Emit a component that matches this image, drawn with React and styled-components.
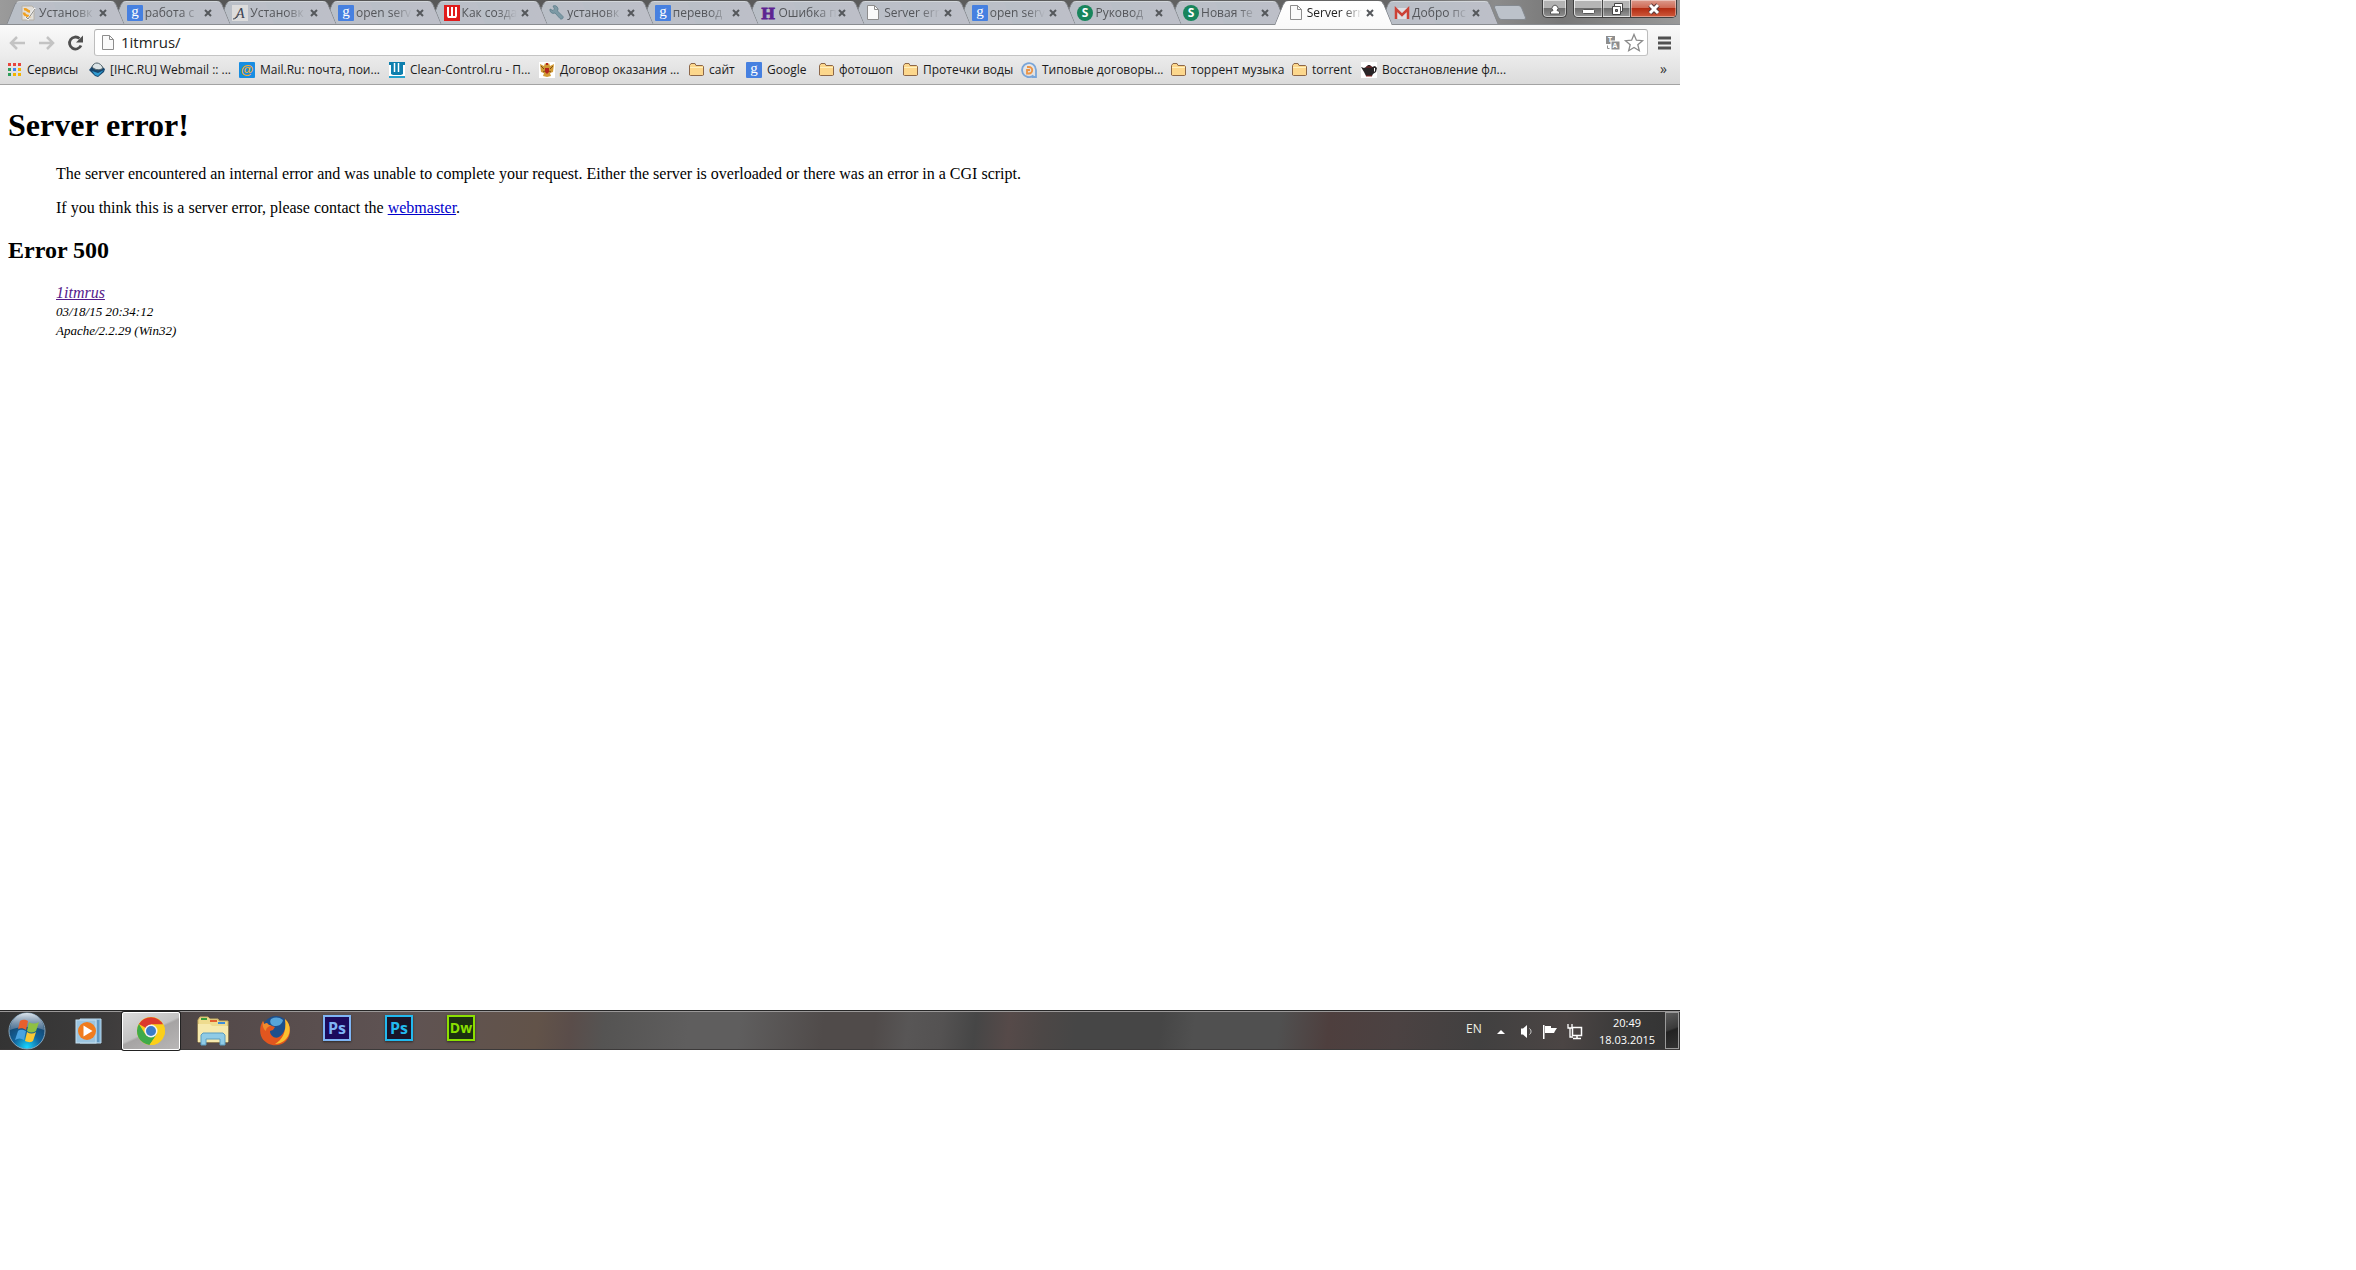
import React, { useState } from "react";
import styled, { createGlobalStyle, css } from "styled-components";

const uiFont = `"Open Sans", "Noto Sans", sans-serif`;

const GlobalStyle = createGlobalStyle`
  html, body, #root {
    height: 100%;
  }
  body {
    margin: 0;
    background: #fff;
  }
  * {
    box-sizing: border-box;
  }
  button {
    border: 0;
    padding: 0;
    margin: 0;
    background: none;
    font-family: inherit;
  }
  svg {
    display: block;
    flex: none;
    overflow: visible;
  }
`;

const Page = styled.div`
  display: grid;
  grid-template-columns: 1680fr 676fr;
  grid-template-rows: 1050fr 220fr;
  min-height: 100%;
`;

const Desktop = styled.div`
  display: flex;
  flex-direction: column;
  min-width: 0;
  font-family: ${uiFont};
  font-size: 12px;
`;

/* ---------- tab strip ---------- */

const TabStrip = styled.div`
  display: flex;
  align-items: flex-start;
  height: 25px;
  padding-right: 3px;
  background: linear-gradient(90deg, #9b9b9b 0, #8a8a8a 60px, #555 130px, #5c5c5c 60%, #666 83%, #8b8b8b 89%, #777 93%, #999 100%);
  border-bottom: 1px solid #898c90;
  position: relative;
`;

const Tabs = styled.div`
  display: flex;
  flex: 1;
  min-width: 0;
  padding: 1px 8px 0 6px;
`;

const Tab = styled.div`
  position: relative;
  flex: 1;
  min-width: 0;
  display: flex;
  align-items: center;
  height: ${(p) => (p.$active ? "24px" : "23px")};
  padding: 0 15px 0 15px;
  margin-right: -14px;
  z-index: ${(p) => p.$level};

  &::before,
  &::after {
    content: "";
    position: absolute;
    z-index: -1;
    top: 0;
    bottom: 0;
    background: ${(p) => (p.$active ? "linear-gradient(#fff, #fafafa)" : "linear-gradient(90deg, #b9bfc7, #bdbfc8)")};
    border-top: 1px solid ${(p) => (p.$active ? "#fff" : "#d2d6da")};
  }
  &::before {
    left: 5px;
    width: 52%;
    transform: skewX(-22deg);
    border-left: 1px solid #84888e;
    border-radius: 5px 0 0 0;
  }
  &::after {
    right: 5px;
    width: 52%;
    transform: skewX(22deg);
    border-right: 1px solid #84888e;
    border-radius: 0 5px 0 0;
  }
`;

const TabButton = styled.button`
  display: flex;
  align-items: center;
  flex: 1;
  min-width: 0;
  gap: 2px;
  color: ${(p) => (p.$active ? "#222" : "#54565a")};
  font-size: 12px;
  line-height: 22px;
  text-align: left;
`;

const TabTitle = styled.span`
  flex: 1;
  white-space: nowrap;
  mask-image: linear-gradient(90deg, #000 65%, transparent 100%);
`;

const TabClose = styled.button`
  width: 16px;
  height: 16px;
  display: grid;
  place-items: center;
  color: #55585c;
`;

const NewTab = styled.button`
  width: 28px;
  height: 15px;
  margin: 5px 18px 0 3px;
  border: 1px solid #858a90;
  border-radius: 3px;
  background: #bcc2ca;
  transform: skewX(22deg);
`;

const frame = css`
  height: 18px;
  border: 1px solid #3f3f3f;
  border-top: 0;
  border-radius: 0 0 5px 5px;
  box-shadow: inset 0 0 0 1px rgba(255, 255, 255, 0.55);
`;

const UserButton = styled.button`
  ${frame}
  width: 25px;
  display: grid;
  place-items: center;
  margin-right: 6px;
  background: linear-gradient(#b2b2b2 45%, #6e6e6e 50%, #8f8f8f);
`;

const WindowControls = styled.div`
  ${frame}
  display: flex;
  overflow: hidden;
  background: linear-gradient(#b5b5b5 45%, #6c6c6c 50%, #999);
`;

const ControlButton = styled.button`
  width: ${(p) => (p.$close ? "46px" : "28px")};
  height: 17px;
  display: grid;
  place-items: center;
  border-left: ${(p) => (p.$first ? "0" : "1px solid #444")};
  background: ${(p) => (p.$close ? "linear-gradient(#dc9a8c 0, #cf6a55 45%, #b32c12 50%, #cf5a3c)" : "none")};
  box-shadow: inset 0 0 0 1px rgba(255, 255, 255, 0.4);
`;

/* ---------- toolbar ---------- */

const Chrome = styled.div`
  background: linear-gradient(#fafafa, #ececec 30px, #dbdbdb);
  border-bottom: 1px solid #a3a3a3;
`;

const Toolbar = styled.div`
  display: flex;
  align-items: center;
  height: 31px;
  padding: 4px 9px 0 8px;
`;

const ToolButton = styled.button`
  width: ${(p) => p.$width || 29}px;
  height: 26px;
  display: flex;
  align-items: center;
`;

const AddressBar = styled.div`
  display: flex;
  align-items: center;
  flex: 1;
  height: 27px;
  padding: 0 3px 0 6px;
  border: 1px solid #b2b2b2;
  border-color: #a9a9a9 #bdbdbd #c4c4c4;
  border-radius: 3px;
  background: #fff;
  gap: 4px;
`;

const AddressInput = styled.input`
  flex: 1;
  min-width: 0;
  border: 0;
  outline: 0;
  padding: 0 0 2px;
  background: none;
  color: #222;
  font-family: ${uiFont};
  font-size: 15px;
  line-height: 20px;
`;

const Bookmarks = styled.nav`
  display: flex;
  align-items: center;
  height: 28px;
  padding: 0 13px 0 6px;
`;

const Bookmark = styled.a`
  display: flex;
  align-items: center;
  gap: 5px;
  margin-right: 13px;
  color: #1b1b1b;
  text-decoration: none;
  white-space: nowrap;
`;

const BookmarkLabel = styled.span`
  width: ${(p) => p.$width}px;
  font-size: 12px;
  line-height: 16px;
`;

const MoreButton = styled.button`
  margin-left: auto;
  padding-bottom: 3px;
  font-size: 14px;
  color: #333;
`;

/* ---------- page content ---------- */

const Content = styled.main`
  flex: 1;
  padding: 22px 8px;
  background: #fff;
  color: #000;
  font-family: "Liberation Serif", serif;
  font-size: 16px;
  line-height: 18px;

  a {
    color: #0000cc;
  }
`;

const Title = styled.h1`
  margin: 0 0 21px;
  font-size: 32px;
  line-height: 37px;
`;

const Subtitle = styled.h2`
  margin: 20px 0;
  font-size: 24px;
  line-height: 27px;
`;

const Paragraph = styled.p`
  margin: 0 0 16px 48px;
`;

const Address = styled.address`
  margin-left: 48px;

  a {
    color: #551a8b;
  }
`;

const Small = styled.span`
  font-size: 13px;
`;

/* ---------- taskbar ---------- */

const Taskbar = styled.footer`
  display: flex;
  align-items: stretch;
  height: 40px;
  border-top: 1px solid #262626;
  box-shadow: inset 0 1px 0 #9a9898, inset 0 -1px 0 #3c3a3a;
  background: linear-gradient(
    97deg,
    #333 0,
    #3c3b3b 6%,
    #544a4a 13%,
    #5f5353 24%,
    #625349 32%,
    #5a4d4a 34%,
    #555453 36%,
    #5f5e5e 41%,
    #5f5e5e 44%,
    #504b4a 49%,
    #504b4a 52%,
    #585656 54%,
    #545252 56%,
    #464646 58%,
    #564a49 60%,
    #4c4746 62%,
    #464646 64%,
    #464646 69%,
    #505050 71%,
    #505050 76%,
    #4e3f3e 79%,
    #4b4242 83%,
    #414040 88%,
    #4b4544 93%,
    #383838 97%,
    #333 100%
  );
`;

const StartButton = styled.button`
  width: 58px;
  padding-left: 8px;
`;

const TaskButton = styled.button`
  width: 58px;
  margin: 1px 2px 0;
  display: grid;
  place-items: center;
  ${(p) =>
    p.$active &&
    css`
      border: 1px solid #fff;
      border-radius: 2px;
      background: linear-gradient(155deg, #dcdcdc 0, #c2c2c2 48%, #a6a4a4 52%, #b8b6b6 100%);
      box-shadow: 0 0 0 1px #222;
    `}
`;

const AdobeIcon = styled.span`
  width: 28px;
  height: 26px;
  margin-bottom: 6px;
  display: grid;
  place-items: center;
  border: 2px solid ${(p) => p.$color};
  background: ${(p) => p.$bg};
  color: ${(p) => p.$color};
  font-size: ${(p) => p.$size || 16}px;
  font-weight: 700;
  line-height: 20px;
  box-shadow: 0 1px 2px rgba(0, 0, 0, 0.5);
`;

const Tray = styled.div`
  display: flex;
  align-items: center;
  margin-left: auto;
  color: #fff;
`;

const Language = styled.button`
  width: 31px;
  padding-bottom: 5px;
  color: #f0f0e6;
  font-size: 12px;
  text-align: left;
`;

const TrayButton = styled.button`
  width: ${(p) => p.$width}px;
  padding-top: 2px;
`;

const Clock = styled.time`
  width: 76px;
  font-size: 11px;
  line-height: 17px;
  text-align: center;
`;

const ShowDesktop = styled.button`
  align-self: stretch;
  width: 14px;
  margin: 1px 1px 1px 0;
  border: 1px solid #9a9a9a;
  background: linear-gradient(160deg, #5b5b5b, #3a3a3a 45%, #222 50%, #333);
`;

/* ---------- icons ---------- */

const Svg = ({ size = 16, w = size, h = size, children }) => (
  <svg width={w} height={h} viewBox={`0 0 ${w} ${h}`} aria-hidden="true">
    {children}
  </svg>
);

const Letter = ({ children, x = 8, y = 12, size = 12, ...rest }) => (
  <text x={x} y={y} fontSize={size} textAnchor="middle" fill="#fff" {...rest}>
    {children}
  </text>
);

const icons = {
  google: (
    <Svg>
      <rect width="16" height="16" rx="1" fill="#4680e0" />
      <Letter y={11} size={15} fontFamily="Liberation Serif">g</Letter>
    </Svg>
  ),
  page: (
    <Svg>
      <path d="M1.5 0.5h7l4 4v10h-11z" fill="#fafafa" stroke="#8d8d8d" />
      <path d="M8.5 0.5v4h4" fill="none" stroke="#8d8d8d" />
    </Svg>
  ),
  notes: (
    <Svg>
      <path d="M1 1h10l2 2v12H1z" fill="#e2dfda" stroke="#b5b0a6" />
      <path d="M3 4.5c3-1 3 2 6 2M3 7.5c0 3 4 4 7 3.5" fill="none" stroke="#f0a020" strokeWidth="2.5" />
      <path d="M4 12l3 2L14 3" fill="none" stroke="#f4f4f2" strokeWidth="2" />
      <path d="M5 12l2 2 7-10" fill="none" stroke="#8b8984" />
    </Svg>
  ),
  pen: (
    <Svg>
      <rect width="16" height="16" fill="#dcdcdc" />
      <Letter y={13} size={15} fill="#3c4554" fontFamily="Liberation Serif" fontStyle="italic">A</Letter>
      <path d="M1 14c3 0 4-2 6-5" fill="none" stroke="#3c4554" />
    </Svg>
  ),
  wred: (
    <Svg>
      <rect width="16" height="16" fill="#e01b1b" />
      <path d="M3 2v9l1 2h8l1-2V2h-2v9h-2V2H7v9H5V2z" fill="#fff" />
    </Svg>
  ),
  wrench: (
    <Svg>
      <path
        d="M1 4a3.5 3.5 0 0 0 5 4l5 5.5c1 1.5 4 0 3-2L8.5 6A3.5 3.5 0 0 0 4 1l1.500 3L4 5.5z"
        fill="#7d9aa5"
        stroke="#5e7f8c"
        strokeWidth="0.8"
      />
    </Svg>
  ),
  hpurple: (
    <Svg>
      <Letter y={14} size={17} fill="#5e2391" stroke="#5e2391" fontWeight="700" fontFamily="Liberation Serif">H</Letter>
    </Svg>
  ),
  sgreen: (
    <Svg>
      <circle cx="8" cy="8" r="8" fill="#18855c" />
      <Letter y={12} fontWeight="700" fontFamily="Open Sans">S</Letter>
    </Svg>
  ),
  gmail: (
    <Svg>
      <rect x="1" y="3" width="14" height="11" fill="#dedee2" />
      <path d="M2 14V4l6 6 6-6v10" fill="none" stroke="#cc4136" strokeWidth="2.5" />
    </Svg>
  ),
  apps: (
    <Svg>
      {["#e8453c", "#e8453c", "#e8453c", "#2f9e5b", "#4285f4", "#f4b400", "#2f9e5b", "#f4b400", "#f4b400"].map((c, i) => (
        <rect key={i} x={2 + (i % 3) * 5} y={1 + Math.floor(i / 3) * 5} width="3" height="3" fill={c} />
      ))}
    </Svg>
  ),
  webmail: (
    <Svg>
      <path d="M0 8l4-5h7l5 4-1 3-6 5-3-1z" fill="#17466d" />
      <path d="M3 9l6 2 6-3-6 6-3-1z" fill="#2f9ad0" />
      <path d="M3 5c1-3 3-4 5-4s5 2 6 5c-2 2-7 3-11-1z" fill="#dbe3e6" stroke="#53646c" />
    </Svg>
  ),
  mailru: (
    <Svg>
      <rect width="16" height="16" rx="1" fill="#168de2" />
      <Letter y={12} size={13} fill="#f9ae2b" fontWeight="700" fontFamily="Liberation Sans">@</Letter>
    </Svg>
  ),
  clean: (
    <Svg>
      <rect width="16" height="16" fill="#fff" />
      <path d="M0 0h16v3h-2v9l-2 1H4l-2-1V3H0z" fill="#0d7fae" />
      <path d="M5.5 1v9M9.5 1v9" stroke="#fff" strokeWidth="1.5" />
      <path d="M0 14h16v2H0z" fill="#24a0cc" />
    </Svg>
  ),
  eagle: (
    <Svg>
      <rect width="16" height="16" fill="#fff" />
      <path d="M1 2l4 2 1-3 2 2 2-2 1 3 4-2-1 8-3 1 1 3-4 1-4-1 1-3-3-1z" fill="#d29a35" />
      <path d="M6 6h4v4l-2 2-2-2zM7 1h2v2H7z" fill="#b3261e" />
      <path d="M2 4l3 3M14 4l-3 3M4 10l2-1M12 10l-2-1" stroke="#7d4d12" />
    </Svg>
  ),
  folder: (
    <Svg>
      <path d="M1.5 3.5V13l1 0.5h12l1-0.5V4.5l-1-1H8l-1-2H3z" fill="#fcd78c" stroke="#8d6748" />
      <path d="M2 5.5h13" stroke="#fff0bd" />
    </Svg>
  ),
  typical: (
    <Svg>
      <path d="M12.5 13.5A7 7 0 1 1 15 8v7h-4" fill="none" stroke="#79a5d8" strokeWidth="1.8" />
      <path d="M6 5h2a3 3 0 0 1 0 6.5H6V8h3" fill="none" stroke="#ec9445" strokeWidth="1.8" />
    </Svg>
  ),
  teapot: (
    <Svg>
      <rect width="16" height="16" fill="#fff" />
      <path d="M0 5l3 1 2-1 2-2h2l2 2 3-1 2 2-1 4-3 2-1 2H5l-2-4z" fill="#292527" />
      <path d="M5 5h6M5 14h6" stroke="#852424" />
      <path d="M13 6h1v3l-1 1z" fill="#fff" />
    </Svg>
  ),
};

const tabs = [
  { icon: "notes", title: "Установк" },
  { icon: "google", title: "работа с" },
  { icon: "pen", title: "Установк" },
  { icon: "google", title: "open serv" },
  { icon: "wred", title: "Как созда" },
  { icon: "wrench", title: "установк" },
  { icon: "google", title: "перевод" },
  { icon: "hpurple", title: "Ошибка п" },
  { icon: "page", title: "Server err" },
  { icon: "google", title: "open serv" },
  { icon: "sgreen", title: "Руковод" },
  { icon: "sgreen", title: "Новая те" },
  { icon: "page", title: "Server err" },
  { icon: "gmail", title: "Добро пс" },
];

const bookmarks = [
  { icon: "apps", label: "Сервисы", width: 49 },
  { icon: "webmail", label: "[IHC.RU] Webmail :: ...", width: 116 },
  { icon: "mailru", label: "Mail.Ru: почта, пои...", width: 116 },
  { icon: "clean", label: "Clean-Control.ru - П...", width: 116 },
  { icon: "eagle", label: "Договор оказания ...", width: 115 },
  { icon: "folder", label: "сайт", width: 24 },
  { icon: "google", label: "Google", width: 38 },
  { icon: "folder", label: "фотошоп", width: 50 },
  { icon: "folder", label: "Протечки воды", width: 85 },
  { icon: "typical", label: "Типовые договоры...", width: 115 },
  { icon: "folder", label: "торрент музыка", width: 87 },
  { icon: "folder", label: "torrent", width: 36 },
  { icon: "teapot", label: "Восстановление фл...", width: 116 },
];

const StartOrb = () => (
  <Svg size={38}>
    <defs>
      <radialGradient id="orb" cx="50%" cy="95%" r="85%">
        <stop offset="0" stopColor="#18d6ff" />
        <stop offset="0.45" stopColor="#12639c" />
        <stop offset="1" stopColor="#163a5c" />
      </radialGradient>
      <linearGradient id="gloss" x1="0" y1="0" x2="0" y2="1">
        <stop offset="0" stopColor="#dde6ee" />
        <stop offset="1" stopColor="#6e8aa6" stopOpacity="0.6" />
      </linearGradient>
    </defs>
    <circle cx="19" cy="19" r="18" fill="url(#orb)" stroke="#86a6bd" />
    <path d="M2 18a17 17 0 0 1 34 0c-9-4-25-4-34 0z" fill="url(#gloss)" />
    <path d="M12 9c3-2 6-1 8 0l-2 9c-3-2-5-2-8-1z" fill="#e8602c" />
    <path d="M21 10c3 2 6 2 10 0l-3 9c-3 2-6 2-9 0z" fill="#8fc043" />
    <path d="M10 19c3-2 5-1 8 0l-2 9c-3-2-6-2-9 0z" fill="#4aa3e0" />
    <path d="M19 20c3 2 6 2 9 0l-3 9c-3 2-5 1-8 0z" fill="#fbc834" />
  </Svg>
);

const MediaPlayer = () => (
  <Svg w={28} h={26}>
    <path d="M5 1h21v24H5z" fill="#7fb0d4" stroke="#b9daf0" />
    <path d="M23 2v22" stroke="#4480ae" />
    <rect x="1" y="2" width="20" height="23" fill="#9cc5e0" stroke="#c6e0f0" />
    <circle cx="12" cy="13" r="9" fill="#f07c1e" />
    <path d="M8.5 7.5v11l9-5.5z" fill="#fff" />
  </Svg>
);

const ChromeLogo = () => (
  <Svg size={28}>
    <circle cx="14" cy="14" r="14" fill="#fbcf1a" />
    <path d="M14 14L1.9 7A14 14 0 0 1 26.1 7.5L14 7.5z" fill="#dc3a2c" />
    <path d="M1.9 7A14 14 0 0 0 12.5 28l7-10.5L8.5 17.5z" fill="#3faa49" />
    <path d="M26.1 7.5H14l6 10L12.5 28A14 14 0 0 0 26.1 7.5z" fill="#fbcf1a" />
    <circle cx="14" cy="14" r="6.5" fill="#f3f3f3" />
    <circle cx="14" cy="14" r="5" fill="#3b7cc9" />
  </Svg>
);

const Explorer = () => (
  <Svg w={34} h={30}>
    <path d="M2 4l2-3h8l2 2h8l1 2h9v21H2z" fill="#eedb8e" stroke="#c9b062" />
    <path d="M5 2h6v2H5z" fill="#3a9b3a" />
    <path d="M14 4h7v2h-7z" fill="#e4602e" />
    <path d="M22 6h7v2h-7z" fill="#3b8edb" />
    <path d="M2 8h12l2 2h16v16H2z" fill="#f6e9ad" />
    <path d="M5 29V19l2-2h20l2 2v10h-5v-6H10v6z" fill="#8fcbe6" stroke="#5a9dc0" />
  </Svg>
);

const Firefox = () => (
  <Svg size={32}>
    <circle cx="17" cy="14" r="13" fill="#1d4f8c" />
    <path d="M12 4a11 11 0 0 1 12 1c-1 5-5 6-8 6-4 0-6-4-4-7z" fill="#57a5da" />
    <path d="M26 4c6 5 7 16 1 22-7 7-19 5-24-3C0 17 1 10 4 6l1 3 3-1c1 2 3 2 5 3l3 1-2 3-3 1c0 5 5 8 9 6 5-3 8-9 6-18z" fill="#e2561f" />
    <path d="M26 4c7 6 6 17-1 22-3 2-6 3-9 3 7-4 12-12 10-25z" fill="#fbc030" />
    <path d="M4 6l1 3 3-1c1 2 3 2 5 3-4 0-6 2-6 5-3-2-4-6-3-10z" fill="#f08a2c" />
  </Svg>
);

const App = () => {
  const [url, setUrl] = useState("1itmrus/");
  const [active, setActive] = useState(12);

  return (
    <>
      <GlobalStyle />
      <Page>
        <Desktop>
          <TabStrip>
            <Tabs>
              {tabs.map((tab, i) => (
                <Tab key={i} $active={i === active} $level={i === active ? 30 : 20 - i}>
                  <TabButton $active={i === active} onClick={() => setActive(i)}>
                    {icons[tab.icon]}
                    <TabTitle>{tab.title}</TabTitle>
                  </TabButton>
                  <TabClose aria-label="Close tab">
                    <Svg size={8}>
                      <path d="M1 1l6 6M7 1L1 7" stroke="currentColor" strokeWidth="2" />
                    </Svg>
                  </TabClose>
                </Tab>
              ))}
            </Tabs>
            <NewTab aria-label="New tab" />
            <UserButton aria-label="User">
              <Svg w={12} h={12}>
                <path d="M1.5 11V8.5L4 7.5a3 3 0 1 1 4 0l2.5 1V11z" fill="#fff" stroke="#555" />
              </Svg>
            </UserButton>
            <WindowControls>
              <ControlButton $first aria-label="Minimize">
                <Svg w={13} h={10}>
                  <rect x="0.5" y="5.5" width="12" height="4" rx="1" fill="#fff" stroke="#555" />
                </Svg>
              </ControlButton>
              <ControlButton aria-label="Restore">
                <Svg w={14} h={14}>
                  <path d="M4.5 1.5h8v8h-2v3h-8v-8h2z" fill="#fff" stroke="#444" />
                  <path d="M4.5 4.5h6v5" fill="none" stroke="#555" />
                  <path d="M5.5 7.5h2v2h-2z" fill="#888" stroke="#444" />
                </Svg>
              </ControlButton>
              <ControlButton $close aria-label="Close">
                <Svg w={12} h={12}>
                  <path d="M2 2l8 8M10 2l-8 8" stroke="#5b3a3a" strokeWidth="5" />
                  <path d="M2 2l8 8M10 2l-8 8" stroke="#fff" strokeWidth="3" />
                </Svg>
              </ControlButton>
            </WindowControls>
          </TabStrip>

          <Chrome>
            <Toolbar>
              <ToolButton aria-label="Back">
                <Svg w={18} h={16}>
                  <path d="M17 8H3M9 2L3 8l6 6" fill="none" stroke="#c3c3c3" strokeWidth="2.5" />
                </Svg>
              </ToolButton>
              <ToolButton aria-label="Forward">
                <Svg w={18} h={16}>
                  <path d="M2 8h14M10 2l6 6-6 6" fill="none" stroke="#c3c3c3" strokeWidth="2.5" />
                </Svg>
              </ToolButton>
              <ToolButton $width={28} aria-label="Reload">
                <Svg w={18} h={16}>
                  <path d="M15 10.5A6 6 0 1 1 13.5 3.5" fill="none" stroke="#4f4f4f" strokeWidth="2.8" />
                  <path d="M17 0.5v7h-7z" fill="#4f4f4f" />
                </Svg>
              </ToolButton>
              <AddressBar>
                {icons.page}
                <AddressInput aria-label="Address" value={url} onChange={(e) => setUrl(e.target.value)} />
                <Svg w={14} h={14}>
                  <rect width="9" height="8" fill="#8e8e8e" />
                  <Letter x={4} y={6} size={7} fontWeight="700">T</Letter>
                  <rect x="5" y="5" width="9" height="9" fill="#8e8e8e" stroke="#fff" />
                  <Letter x={9} y={12} size={7} fontWeight="700">A</Letter>
                  <path d="M1.5 9.5v3h2" stroke="#8e8e8e" fill="none" />
                </Svg>
                <Svg w={20} h={20}>
                  <path
                    d="M10 1.5l2.4 5.7 6.1.5-4.7 4 1.5 6-5.300-3.300-5.300 3.300 1.500-6-4.700-4 6.100-.5z"
                    fill="#fff"
                    stroke="#8a8a8a"
                    strokeWidth="1.3"
                  />
                </Svg>
              </AddressBar>
              <ToolButton $width={23} aria-label="Menu">
                <Svg w={23} h={14}>
                  <path d="M10 2h13M10 7h13M10 12h13" stroke="#505050" strokeWidth="3" />
                </Svg>
              </ToolButton>
            </Toolbar>
            <Bookmarks>
              {bookmarks.map((b) => (
                <Bookmark key={b.label} href="#">
                  {icons[b.icon]}
                  <BookmarkLabel $width={b.width}>{b.label}</BookmarkLabel>
                </Bookmark>
              ))}
              <MoreButton aria-label="More bookmarks">»</MoreButton>
            </Bookmarks>
          </Chrome>

          <Content>
            <Title>Server error!</Title>
            <Paragraph>
              The server encountered an internal error and was unable to complete your request. Either the server is
              overloaded or there was an error in a CGI script.
            </Paragraph>
            <Paragraph>
              If you think this is a server error, please contact the <a href="#">webmaster</a>.
            </Paragraph>
            <Subtitle>Error 500</Subtitle>
            <Address>
              <a href="#">1itmrus</a>
              <br />
              <Small>
                03/18/15 20:34:12
                <br />
                Apache/2.2.29 (Win32)
              </Small>
            </Address>
          </Content>

          <Taskbar>
            <StartButton aria-label="Start">
              <StartOrb />
            </StartButton>
            <TaskButton aria-label="Media Player">
              <MediaPlayer />
            </TaskButton>
            <TaskButton $active aria-label="Chrome">
              <ChromeLogo />
            </TaskButton>
            <TaskButton aria-label="Explorer">
              <Explorer />
            </TaskButton>
            <TaskButton aria-label="Firefox">
              <Firefox />
            </TaskButton>
            <TaskButton>
              <AdobeIcon $color="#7fb5f5" $bg="#1b0a5c">Ps</AdobeIcon>
            </TaskButton>
            <TaskButton>
              <AdobeIcon $color="#22b9ee" $bg="#191428">Ps</AdobeIcon>
            </TaskButton>
            <TaskButton>
              <AdobeIcon $color="#8be000" $bg="#1c3010" $size={14}>Dw</AdobeIcon>
            </TaskButton>

            <Tray>
              <Language>EN</Language>
              <TrayButton $width={23} aria-label="Hidden icons">
                <Svg w={8} h={4}>
                  <path d="M4 0l4 4H0z" fill="#fff" />
                </Svg>
              </TrayButton>
              <TrayButton $width={22} aria-label="Volume">
                <Svg w={13} h={15}>
                  <path d="M1 4.5h2L7 1v13l-4-3.5H1z" fill="#fff" />
                  <path d="M9.5 4.5c2 1.5 2 4.5 0 6" fill="none" stroke="#ddd" />
                </Svg>
              </TrayButton>
              <TrayButton $width={25} aria-label="Action center">
                <Svg w={16} h={14}>
                  <path d="M1 0h1.5v14H1zM3 1h6v7H3zM9 3h6l-2 3-1 2H9z" fill="#fff" />
                </Svg>
              </TrayButton>
              <TrayButton $width={22} aria-label="Network">
                <Svg w={16} h={15}>
                  <path d="M5.5 3.5h9v8h-9zM10 12v2M6 14.5h8" fill="none" stroke="#fff" strokeWidth="1.5" />
                  <path d="M1 0v4h4V0M3 4v9h3" fill="none" stroke="#fff" strokeWidth="1.3" />
                </Svg>
              </TrayButton>
              <Clock>
                20:49
                <br />
                18.03.2015
              </Clock>
              <ShowDesktop aria-label="Show desktop" />
            </Tray>
          </Taskbar>
        </Desktop>
      </Page>
    </>
  );
};

export default App;
